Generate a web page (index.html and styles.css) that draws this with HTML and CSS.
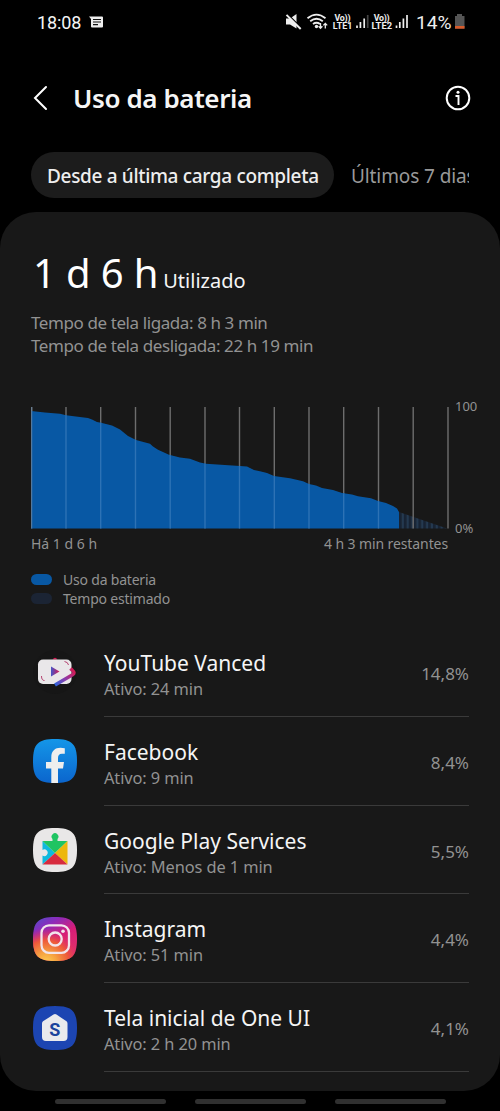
FILE: index.html
```html
<!DOCTYPE html>
<html lang="pt-BR">
<head>
<meta charset="utf-8">
<title>Uso da bateria</title>
<link rel="stylesheet" href="styles.css">
</head>
<body>
<div class="status">
  <span class="clock">18:08</span>
  <svg class="msg" width="14" height="13" viewBox="0 0 14 13"><path d="M0 .5H13Q14 .5 14 1.500V10.500Q14 11.500 13 11.500H3Q2 11.500 2 10.500V3Z" fill="#eee"/><path d="M4 3.500H12M4 6H12M4 8.600H9" stroke="#111" stroke-width="1.100"/></svg>
  <div class="indicators">
    <svg width="216" height="20" viewBox="285 12 216 20">
      <path d="M286 18.500H290L296.500 14V28.500L290 24.500H286Z" fill="#eee"/>
      <path d="M287.500 14L302 28.500" stroke="#000" stroke-width="1.500"/><path d="M286.500 14.800L300.700 29" stroke="#eee" stroke-width="1.900"/>
      <g fill="none" stroke="#eee" stroke-width="1.800"><path d="M307.500 18.200Q316.500 11 325.500 18.200M310.200 21.200Q316.500 16.200 322.800 21.200M313 24Q316.500 21.500 320 24"/></g>
      <circle cx="316.500" cy="26.500" r="1.700" fill="#eee"/>
      <path d="M320.500 23V28M318.600 26.200L320.500 28.200L322.400 26.200M325.300 28.500V23.500M323.400 25.400L325.300 23.400L327.200 25.400" fill="none" stroke="#eee" stroke-width="1.300"/>
      <g class="lte"><text x="334.500" y="20.600" textLength="16">Vo))</text><text x="332.800" y="29.300" textLength="19.500" lengthAdjust="spacingAndGlyphs">LTE1</text><text x="373.700" y="20.600" textLength="16">Vo))</text><text x="371.600" y="29.300" textLength="20.500" lengthAdjust="spacingAndGlyphs">LTE2</text></g>
      <path d="M357 25.500V28M360.400 22V28M364.200 18.500V28M396.500 25.500V28M399.800 22V28M403.400 18.500V28M407 15V28" stroke="#eee" stroke-width="1.700"/><path d="M367.700 15V28" stroke="#444" stroke-width="1.700"/>
      <text class="level" x="416" y="28.600" textLength="35.500" lengthAdjust="spacingAndGlyphs">14%</text>
      <path d="M457 14H462V16H464.500V28.500H455V16H457Z" fill="#555"/><path d="M455 26H464.500V28.700H455Z" fill="#d65b2b"/>
    </svg>
  </div>
</div>
<header class="header">
  <svg width="16" height="26" viewBox="0 0 16 26"><path d="M14 2L3 13L14 24" fill="none" stroke="#fff" stroke-width="2" stroke-linecap="round"/></svg>
  <h1>Uso da bateria</h1>
  <svg class="info" width="26" height="26" viewBox="0 0 26 26"><g fill="none" stroke="#fff"><circle cx="13" cy="13" r="11.300" stroke-width="2"/><path d="M10.500 11H13.500V20" stroke-width="1.900"/></g><circle cx="13" cy="7.300" r="1.500" fill="#fff"/></svg>
</header>
<nav class="tabs"><span class="tab active"><b>Desde a última carga completa</b></span><span class="tab recent">Últimos 7 dias</span></nav>
<main class="card">
  <div class="summary"><span class="big">1 d 6 h</span><span class="used">Utilizado</span></div>
  <div class="times"><p>Tempo de tela ligada: 8 h 3 min</p><p>Tempo de tela desligada: 22 h 19 min</p></div>
  <div class="chart">
    <svg width="418" height="124" viewBox="31 406 418 124">
      <defs>
        <clipPath id="usage"><path d="M31 411L45 412.500 60 413.700 66 415.300 88 418 92 419.500 97 422 101 422.700 112 425.500 120 429.500 128 436 136 440 150 443.800 153 446.500 158 449.700 169 454.800 180 457.500 190 458.800 200 462.500 206 463.700 240 466 247 466.500 254 470 260 471.300 267 473 274 476 290 478.200 303 481.300 309 484 316 485.500 322 488 333 490 342 493 352 494.500 358 496.300 371 498.300 378 501 386 503 393 506 397 508.500 399 512V528.400H31Z"/></clipPath>
        <pattern id="stripes" x="399" width="4.850" height="10" patternUnits="userSpaceOnUse"><path d="M0 0H2.600V10H0Z" fill="#172334"/><path d="M2.600 0H4.850V10H2.600Z" fill="#243950"/></pattern>
      </defs>
      <path d="M399 512L447 528.400H399Z" fill="url(#stripes)"/>
      <path class="grid" d="M31.700 407V528.400M66 407V528.400M100.700 407V528.400M135.500 407V528.400M170.200 407V528.400M205 407V528.400M239.500 407V528.400M274.300 407V528.400M309 407V528.400M343.700 407V528.400M378.500 407V528.400M413.200 407V528.400M448 407V528.400"/>
      <g clip-path="url(#usage)"><path d="M31 406H399V529H31Z" fill="#0858a4"/><path class="grid-over" d="M66 407V528.400M100.700 407V528.400M135.500 407V528.400M170.200 407V528.400M205 407V528.400M239.500 407V528.400M274.300 407V528.400M309 407V528.400M343.700 407V528.400M378.500 407V528.400"/></g>
      <path d="M31.700 407V528.400" stroke="#66809a" stroke-width="1"/>
    </svg>
    <div class="scale"><span>100</span><span>0%</span></div>
  </div>
  <div class="range"><span>Há 1 d 6 h</span><span class="left">4 h 3 min restantes</span></div>
  <div class="legend"><p><i class="blue"></i><span>Uso da bateria</span></p><p><i class="dark"></i><span>Tempo estimado</span></p></div>
  <ul class="apps">
    <li><svg class="icon" viewBox="0 0 44 44"><defs><linearGradient id="yv" gradientUnits="userSpaceOnUse" x1="22" x2="42" y1="34" y2="20"><stop stop-color="#2864dc"/><stop offset=".5" stop-color="#8b3cab"/><stop offset="1" stop-color="#d51b55"/></linearGradient><linearGradient id="play"><stop stop-color="#4456c8"/><stop offset="1" stop-color="#d51b55"/></linearGradient></defs><circle cx="22" cy="22" r="22" fill="#161616"/><g transform="translate(-.5 1)"><path d="M20 8.500Q22.500 5 25 8.500Z" fill="#d51b55"/><rect x="5.500" y="8.500" width="33.500" height="24.500" rx="5" fill="#e9e7e9"/><path d="M9 25Q9 29.500 12 29.500M32 10.500Q35.500 11 36 14" fill="none" stroke="#b54270" stroke-width="1"/><path d="M18.500 15.500L27 20.500 18.500 25.500Z" fill="url(#play)"/><path d="M22.500 34L40 23.800Q43 22 40 19.500L38 17.500" fill="none" stroke="url(#yv)" stroke-width="3.500"/></g></svg>
      <div class="app"><div class="name">YouTube Vanced</div><div class="active-time">Ativo: 24 min</div></div><span class="percent">14,8%</span></li>
    <li><svg class="icon" viewBox="0 0 44 44"><defs><linearGradient id="fb" x1="0" x2="0" y1="0" y2="1"><stop stop-color="#1496e8"/><stop offset="1" stop-color="#0b65cd"/></linearGradient></defs><path d="M22 0C39 0 44 5 44 22S39 44 22 44 0 39 0 22 5 0 22 0Z" fill="url(#fb)"/><path d="M18.300 44V29.500H13V23H18.300V18.300C18.300 12 22 8.800 27.500 8.800Q30 8.800 31.800 9.200V14.800H29C26 14.800 25 16.500 25 19V23H31L30 29.500H25V44Z" fill="#eee"/></svg>
      <div class="app"><div class="name">Facebook</div><div class="active-time">Ativo: 9 min</div></div><span class="percent">8,4%</span></li>
    <li><svg class="icon" viewBox="0 0 44 44"><path d="M22 0C39 0 44 5 44 22S39 44 22 44 0 39 0 22 5 0 22 0Z" fill="#e9e7e7"/><path d="M9.500 13L22 25 9.500 36.500V27.500A3.300 3.300 0 1 0 9.500 22Z" fill="#0eb9de"/><path d="M9.500 13H19.500V11A3.400 3.400 0 1 1 24.500 11V13H34.500L22 25Z" fill="#1fc462"/><path d="M34.500 13V36.500L22 25Z" fill="#edb70b"/><path d="M9.500 36.500L22 25 34.500 36.500Z" fill="#d72b3e"/></svg>
      <div class="app"><div class="name">Google Play Services</div><div class="active-time">Ativo: Menos de 1 min</div></div><span class="percent">5,5%</span></li>
    <li><svg class="icon" viewBox="0 0 44 44"><defs><linearGradient id="ig" x1="0" y1="0" x2=".65" y2="1"><stop stop-color="#4c50cc"/><stop offset=".28" stop-color="#8b2bbb"/><stop offset=".6" stop-color="#d71d77"/><stop offset="1" stop-color="#df316b"/></linearGradient><radialGradient id="glow" cx=".3" cy="1.050" r=".8"><stop stop-color="#ffd153"/><stop offset=".3" stop-color="#f6a341"/><stop offset=".65" stop-color="#ed583b"/><stop offset="1" stop-color="#df2272" stop-opacity="0"/></radialGradient></defs><path d="M22 0C39 0 44 5 44 22S39 44 22 44 0 39 0 22 5 0 22 0Z" fill="url(#ig)"/><path d="M22 0C39 0 44 5 44 22S39 44 22 44 0 39 0 22 5 0 22 0Z" fill="url(#glow)"/><g fill="none" stroke="#f2e4eb" stroke-width="2.300"><rect x="8.500" y="8.300" width="27.500" height="27.500" rx="7.500"/><circle cx="22.200" cy="22" r="6.500"/></g><circle cx="30" cy="14.200" r="1.800" fill="#f2e4eb"/></svg>
      <div class="app"><div class="name">Instagram</div><div class="active-time">Ativo: 51 min</div></div><span class="percent">4,4%</span></li>
    <li><svg class="icon" viewBox="0 0 44 44"><path d="M22 0C39 0 44 5 44 22S39 44 22 44 0 39 0 22 5 0 22 0Z" fill="#1c45b2"/><path d="M20.500 8.600Q22 7.500 23.500 8.600L33.500 15.300Q34.500 16 34.500 17.500V31Q34.500 35 30.500 35H13Q9 35 9 31V17.500Q9 16 10 15.300Z" fill="#e9eaed"/><text class="home-s" x="21.900" y="29.800">S</text></svg>
      <div class="app"><div class="name">Tela inicial de One UI</div><div class="active-time">Ativo: 2 h 20 min</div></div><span class="percent">4,1%</span></li>
  </ul>
</main>
<footer class="navhints"><i></i><i></i><i></i></footer>
</body>
</html>
```
FILE: styles.css
```css
* { box-sizing: border-box; }
body { margin: 0; width: 500px; height: 1111px; overflow: hidden; background: #000; color: #f5f5f5; font-family: "Noto Sans", sans-serif; display: flex; flex-direction: column; }
p, h1, ul { margin: 0; padding: 0; }
svg { display: block; flex: none; }
span, .name, .active-time, h1 { white-space: nowrap; }
.status { height: 44px; flex: none; display: flex; align-items: center; padding-left: 37px; font-family: Roboto, sans-serif; }
.clock { width: 52px; font-size: 18px; line-height: 24px; padding-top: 1px; letter-spacing: -.1px; }
.indicators { margin-left: auto; width: 215px; }
.lte { fill: #eee; font: bold 8.800px Roboto, sans-serif; }
.level { fill: #eee; font: 18px Roboto, sans-serif; }
.header { height: 108px; flex: none; display: flex; align-items: center; padding: 0 29px 0 32px; }
.header h1 { margin-left: 25px; font-size: 26px; line-height: 36px; font-weight: 600; letter-spacing: -.4px; }
.info { margin-left: auto; }
.tabs { height: 46px; flex: none; display: flex; margin: 0 31px; overflow: hidden; }
.tab { font-size: 19px; line-height: 47px; padding-top: 1px; color: #999; padding-left: 16px; }
.tab.active { background: #1c1c1c; color: #eee; border-radius: 23px; width: 303px; flex: none; }
.tab.recent { letter-spacing: -.1px; padding-left: 17px; }
.tab b { font-weight: 500; letter-spacing: -.33px; }
.card { height: 879px; flex: none; margin-top: 14px; background: #181818; border-radius: 36px; padding: 34px 31px 0; }
.summary { height: 56px; display: flex; align-items: baseline; gap: 5px; line-height: 54px; }
.big { font-size: 40px; color: #fff; padding-left: 2px; letter-spacing: -.15px; }
.used { font-size: 20px; }
.times { padding-top: 9px; font-size: 17px; line-height: 23px; letter-spacing: -.41px; color: #929292; }
.chart { display: flex; margin-top: 49px; height: 124px; }
.grid { stroke: #6d6d6d; stroke-width: 1.400; fill: none; }
.grid-over { stroke: #2d72b5; stroke-width: 1.400; fill: none; }
.scale { display: flex; flex-direction: column; justify-content: space-between; margin: -9px 0 -7px 6px; font-size: 13px; line-height: 18px; color: #929292; }
.range { display: flex; justify-content: space-between; width: 417px; margin-top: 4px; font-size: 14px; line-height: 20px; color: #929292; }
.left { letter-spacing: -.1px; }
.legend { height: 55px; padding-top: 16px; font-size: 14px; letter-spacing: -.2px; line-height: 19px; color: #929292; }
.legend p { display: flex; align-items: center; gap: 11px; }
.legend i { width: 21px; height: 11px; border-radius: 6px; }
.blue { background: #0858a4; }
.dark { background: #1b2434; }
.apps { list-style: none; margin-top: 19px; }
.apps li { height: 88.800px; display: flex; align-items: center; }
.icon { width: 44px; height: 44px; margin-left: 2px; }
.app { margin-left: 27px; width: 300px; height: 88.800px; padding-top: 21px; border-bottom: 1.500px solid #3a3a3a; }
.name { font-size: 21px; line-height: 28px; }
.active-time { font-size: 16.400px; line-height: 24px; letter-spacing: -.1px; color: #929292; }
.percent { height: 88.800px; flex: 1; text-align: right; font-size: 17px; line-height: 91px; color: #929292; border-bottom: 1.500px solid #3a3a3a; }
.home-s { fill: #1b449c; font: bold 18px Roboto, sans-serif; text-anchor: middle; }
.navhints { height: 20px; flex: none; display: flex; justify-content: center; padding-top: 8px; gap: 29px; }
.navhints i { width: 111px; height: 5px; border-radius: 3px; background: #303030; }
```
